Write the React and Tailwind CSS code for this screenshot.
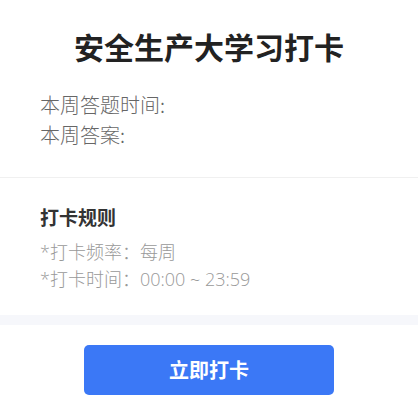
export default function App() {
  return (
    <div className="w-[418px] h-[415px] bg-white font-['Noto_Sans_CJK_SC','Noto_Sans',sans-serif] overflow-hidden">
      <div className="px-10 pt-[26px] pb-[27px] border-b border-[#f0f0f0]">
        <h1 className="text-center text-[30px] leading-[40px] font-bold text-[#222]">安全生产大学习打卡</h1>
        <div className="mt-6 text-[20px] leading-[30px] font-light text-[#666]">
          <div>本周答题时间:</div>
          <div>本周答案:</div>
        </div>
      </div>
      <div className="px-10 pt-[25px] pb-[22px]">
        <div className="text-[19px] leading-[28px] font-bold text-[#333]">打卡规则</div>
        <div className="mt-2 text-[18px] leading-[27px] font-light text-[#999] font-['Open_Sans','Noto_Sans_CJK_SC',sans-serif]">
          <div>*打卡频率：每周</div>
          <div>*打卡时间：00:00 ~ 23:59</div>
        </div>
      </div>
      <div className="h-[10px] bg-[#f6f7fb]"></div>
      <div className="pt-5 flex justify-center">
        <button className="w-[250px] h-[50px] rounded-[5px] bg-[#3b78f6] text-white text-[20px] font-bold">立即打卡</button>
      </div>
    </div>
  );
}
